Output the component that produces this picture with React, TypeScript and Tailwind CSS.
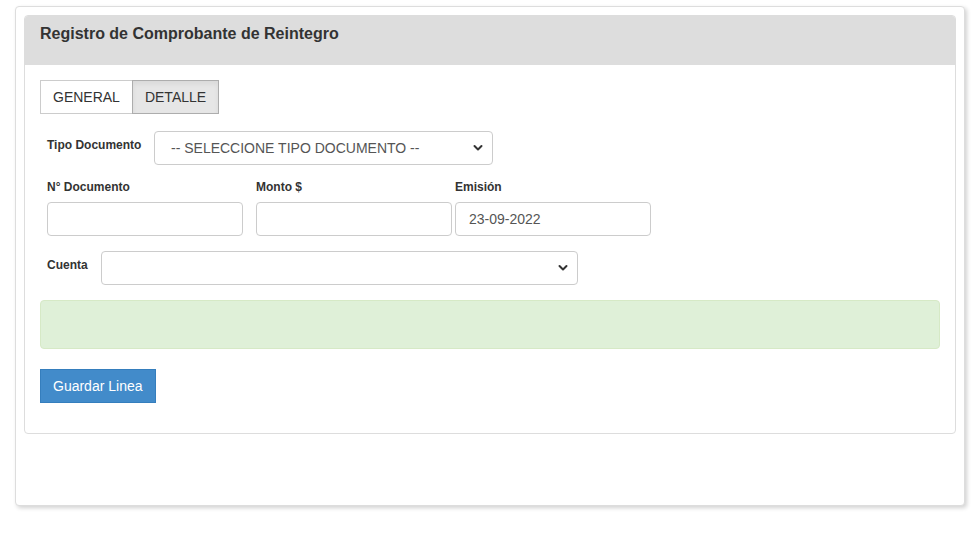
import React from "react";

const Chevron = () => (
  <svg
    className="pointer-events-none absolute right-[9px] top-1/2 -translate-y-1/2"
    width="10"
    height="7"
    viewBox="0 0 10 7"
  >
    <path d="M1.5 1.5 L5 5 L8.5 1.5" fill="none" stroke="#333" strokeWidth="2" strokeLinecap="round" strokeLinejoin="round" />
  </svg>
);

const SelectBox = ({ w, text }: { w: string; text?: string }) => (
  <div className={`relative ${w} h-[34px] border border-[#ccc] rounded-[4px] bg-white flex items-center pl-[16px] text-[14px] text-[#555]`}>
    <span>{text}</span>
    <Chevron />
  </div>
);

const InputBox = ({ value }: { value?: string }) => (
  <div className="w-[196px] h-[34px] border border-[#ccc] rounded-[4px] bg-white flex items-center pl-[13px] text-[14px] text-[#555]">
    {value}
  </div>
);

export default function App() {
  return (
    <div className="w-[976px] h-[555px] bg-white pt-[6px] pl-[15px]" style={{ fontFamily: '"Liberation Sans", Arial, sans-serif' }}>
      <div className="w-[950px] h-[500px] border border-[#ddd] rounded-[4px] bg-white shadow-[2px_2px_4px_rgba(0,0,0,0.18)] p-[8px]">
        <div className="w-[932px] border border-[#ddd] rounded-[4px] bg-white">
          <div className="h-[49px] bg-[#dddddd] rounded-t-[3px] px-[15px] pt-[8px]">
            <div className="text-[16px] leading-[20px] font-bold text-[#333]">Registro de Comprobante de Reintegro</div>
          </div>
          <div className="px-[15px] pt-[15px] pb-[30px]">
            <div className="flex">
              <div className="h-[34px] px-[12px] border border-[#ccc] bg-white flex items-center text-[14px] text-[#333]">GENERAL</div>
              <div className="h-[34px] px-[12px] border border-[#adadad] -ml-px bg-[#e6e6e6] shadow-[inset_0_3px_5px_rgba(0,0,0,0.06)] flex items-center text-[14px] text-[#333]">DETALLE</div>
            </div>

            <div className="flex mt-[17px] ml-[7px]">
              <div className="w-[107px] pt-[6px] text-[12px] leading-[17px] font-bold text-[#333]">Tipo Documento</div>
              <SelectBox w="w-[339px]" text="-- SELECCIONE TIPO DOCUMENTO --" />
            </div>

            <div className="flex mt-[14px] ml-[7px] gap-[13px]">
              <div className="flex flex-col">
                <div className="text-[12px] leading-[17px] font-bold text-[#333] mb-[6px]">N° Documento</div>
                <InputBox />
              </div>
              <div className="flex flex-col">
                <div className="text-[12px] leading-[17px] font-bold text-[#333] mb-[6px]">Monto $</div>
                <InputBox />
              </div>
              <div className="flex flex-col -ml-[10px]">
                <div className="text-[12px] leading-[17px] font-bold text-[#333] mb-[6px]">Emisión</div>
                <InputBox value="23-09-2022" />
              </div>
            </div>

            <div className="flex mt-[15px] ml-[7px]">
              <div className="w-[54px] pt-[6px] text-[12px] leading-[17px] font-bold text-[#333]">Cuenta</div>
              <SelectBox w="w-[477px]" />
            </div>

            <div className="mt-[15px] h-[49px] bg-[#dff0d8] border border-[#d6e9c6] rounded-[4px]" />

            <div className="mt-[20px] flex">
              <div className="h-[34px] px-[12px] bg-[#428bca] border border-[#357ebd] text-white text-[14px] flex items-center">Guardar Linea</div>
            </div>
          </div>
        </div>
      </div>
    </div>
  );
}
